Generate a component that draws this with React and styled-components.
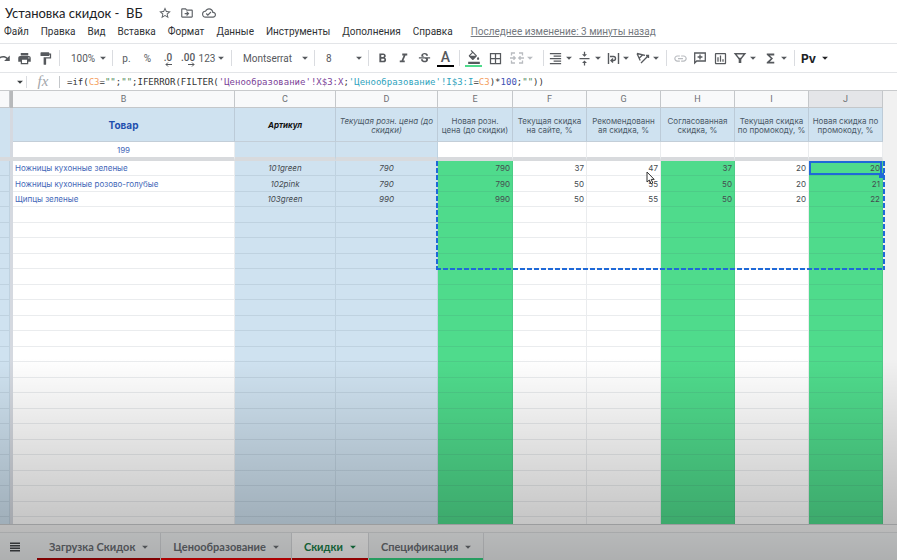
import React from 'react'
import styled, { createGlobalStyle, css } from 'styled-components'
import {
  MdArrowDropDown,
  MdBorderAll,
  MdFormatAlignRight,
  MdFormatBold,
  MdFormatColorFill,
  MdFormatItalic,
  MdFormatPaint,
  MdFunctions,
  MdInsertLink,
  MdOutlineCloudDone,
  MdOutlineDriveFileMove,
  MdOutlineInsertChart,
  MdPrint,
  MdRedo,
  MdStarBorder,
  MdStrikethroughS,
  MdVerticalAlignCenter,
} from 'react-icons/md'

const GREEN = '#4fdb8c'
const BLUE = '#cfe2f0'
const ACCENT = '#1f69d8'

const GlobalStyle = createGlobalStyle`
  * {
    box-sizing: border-box;
  }

  body {
    margin: 0;
    overflow: hidden;
    background: #fff;
    color: #3c4043;
    font-family: Roboto, "Liberation Sans", sans-serif;
  }

  button,
  select,
  input {
    margin: 0;
    padding: 0;
    border: 0;
    background: none;
    color: inherit;
    font: inherit;
  }
`

const Page = styled.div`
  position: relative;
  display: flex;
  flex-direction: column;
  height: 100vh;
`

const Shade = styled.div`
  position: absolute;
  inset: 64% 0 0;
  background: linear-gradient(rgba(0, 0, 0, 0), rgba(0, 0, 0, 0.28));
  pointer-events: none;
`

const TitleRow = styled.header`
  display: flex;
  align-items: center;
  gap: 8px;
  height: 25px;
  padding-left: 5px;
`

const Title = styled.h1`
  margin: 0 7px 0 0;
  color: #202124;
  font-family: Lato, sans-serif;
  font-size: 13px;
  font-weight: 400;
  white-space: pre;
`

const TitleButton = styled.button`
  display: flex;
  color: #5f6368;
  font-size: 14px;
`

const MenuRow = styled.nav`
  display: flex;
  align-items: center;
  gap: 12px;
  height: 19px;
  padding: 0 0 5px 4px;
  border-bottom: 1px solid #e3e5e8;
  color: #2f3235;
  font-size: 10px;
  white-space: nowrap;
`

const LastEdit = styled.a`
  margin-left: 6px;
  color: #75797e;
`

const ToolBar = styled.div`
  display: flex;
  align-items: center;
  height: 29px;
  margin-left: -10px;
  border-bottom: 1px solid #e3e5e8;
  color: #56595d;
`

const Group = styled.div`
  display: flex;
  align-items: center;
  height: 16px;
  padding: 0 3px;

  & + & {
    border-left: 1px solid #dadce0;
  }
`

const Tool = styled.button`
  display: flex;
  align-items: center;
  justify-content: center;
  width: ${props => props.$width || 21}px;
  color: ${props => (props.$dim ? '#b9bcc0' : 'inherit')};
  font-size: ${props => (props.$text ? 10 : 15)}px;

  svg {
    flex: none;
  }
`

const Caret = styled(MdArrowDropDown)`
  flex: none;
  margin: 0 -1px;
  font-size: 14px;
`

const ColorTool = styled(Tool)`
  width: 17px;
  height: 18px;
  margin: 0 2px;
  border-bottom: 2px solid ${props => props.$color};
  font-size: 14px;
  font-weight: 500;
`

const Decimals = styled.span`
  display: flex;
  flex-direction: column;
  align-items: flex-end;
  padding-top: 4px;
  font-weight: 500;
  line-height: 8px;
`

const Picker = styled.label`
  position: relative;
  display: flex;
  align-items: center;
  width: ${props => props.$width}px;
  padding-left: 8px;
  font-size: 10px;

  select {
    width: 100%;
    appearance: none;
  }

  svg {
    position: absolute;
    right: 0;
    pointer-events: none;
  }
`

const AddOnTool = styled(Tool)`
  gap: 3px;
  color: #202124;
  font: 700 12px Inter, sans-serif;
`

const FormulaBar = styled.div`
  display: flex;
  align-items: center;
  height: 18px;
  border-bottom: 1px solid #c8cacc;
`

const NameBoxButton = styled.button`
  display: flex;
  align-items: center;
  justify-content: flex-end;
  width: 27px;
  height: 12px;
  border-right: 1px solid #dadce0;
`

const FxMark = styled.span`
  width: 33px;
  height: 12px;
  border-right: 1px solid #c4c7ca;
  color: #a3a6aa;
  font: italic 15px/11px "Liberation Serif", serif;
  text-align: center;
`

const Formula = styled.code`
  padding-left: 7px;
  color: #333;
  font: 9px/12px "DejaVu Sans Mono", monospace;
  white-space: nowrap;
`

const Part = styled.span`
  color: ${props => props.$color};
`

const Grid = styled.main`
  position: relative;
  flex: 1;
  min-height: 0;
  overflow: hidden;
  background: #f1f1f1;
`

const Sheet = styled.table`
  width: 100%;
  border-collapse: separate;
  border-spacing: 0;
  table-layout: fixed;
  font: 9px/10px Inter, sans-serif;
`

const Letter = styled.th`
  height: 17px;
  padding: 0;
  border-right: 1px solid #c4c7ca;
  border-bottom: 1px solid #c4c7ca;
  background: ${props => (props.$active ? '#e4e5e8' : '#f8f9fa')};
  color: #6d7074;
  font: 400 9px/12px Roboto, sans-serif;
`

const Gap = styled.td`
  padding: 0;
  background: ${props => (props.$head ? '#b7b9bb' : '#d5d9e0')};
`

const Side = styled.td`
  padding: 0;
  background: ${props => (props.$fill ? BLUE : '#f1f1f1')};
`

const HeadCell = styled.th`
  height: 34px;
  padding: 2px 0 0;
  border-right: 1px solid #bccbd8;
  border-bottom: 1px solid #c3ced8;
  background: ${BLUE};
  color: #4a5866;
  font-size: 8px;
  font-weight: 400;
  line-height: 9px;
  white-space: pre-line;

  ${props => props.$look === 'product' && css`
    color: #1f4fae;
    font-size: 10px;
    font-weight: 700;
  `}

  ${props => props.$look === 'code' && css`
    color: #111;
    font-style: italic;
    font-weight: 700;
  `}

  ${props => props.$look === 'italic' && css`
    font-style: italic;
  `}
`

const Cell = styled.td`
  position: relative;
  padding: 0 2px;
  border-right: 1px solid rgba(60, 80, 100, 0.11);
  border-bottom: 1px solid rgba(60, 80, 100, 0.11);
  background: ${props => props.$fill || '#fff'};
  color: ${props => props.$color || '#454b50'};
  font-size: 8px;
  font-style: ${props => (props.$italic ? 'italic' : 'normal')};
  text-align: ${props => props.$align || 'right'};
  white-space: nowrap;

  ${props => props.$selected && css`
    box-shadow: inset 0 0 0 2px ${ACCENT};
  `}
`

const Row = styled.tr`
  height: 15px;

  &:nth-child(even) {
    height: 16px;
  }
`

const FilterRow = styled.tr`
  height: 19px;

  td:not(:last-child) {
    border-bottom: 4px solid #d8dadd;
  }
`

const FillHandle = styled.span`
  position: absolute;
  right: -2px;
  bottom: -3px;
  z-index: 2;
  width: 5px;
  height: 5px;
  background: ${ACCENT};
`

// dashed frame round the copied range E3:J9
const CopyFrame = styled.div`
  position: absolute;
  top: 70px;
  left: 436px;
  width: 449px;
  height: 109px;
  background:
    repeating-linear-gradient(90deg, ${ACCENT} 0 5px, transparent 5px 7px) bottom / 100% 2px no-repeat,
    repeating-linear-gradient(${ACCENT} 0 5px, transparent 5px 7px) left / 2px 100% no-repeat,
    repeating-linear-gradient(${ACCENT} 0 5px, transparent 5px 7px) right / 2px 100% no-repeat;
  pointer-events: none;
`

const Pointer = styled.svg`
  position: absolute;
  top: 80px;
  left: 646px;
`

const ScrollStrip = styled.div`
  height: 8px;
  border-top: 1px solid #c9cbcd;
  background: #f3f3f3;
`

const TabBar = styled.footer`
  display: flex;
  height: 28px;
  border-top: 1px solid #dcdee0;
  background: #f1f3f4;
`

const AllSheets = styled.button`
  width: 37px;
  padding: 0 7px 0 0;
  color: #44474a;
`

const Tab = styled.button`
  display: flex;
  align-items: center;
  gap: 4px;
  padding: 1px 9px 0 12px;
  border-right: 1px solid #d8dadd;
  background: ${props => (props.$active ? '#fff' : 'transparent')};
  box-shadow: inset 0 -2px ${props => props.$line};
  color: ${props => (props.$active ? '#188048' : '#6b6f74')};
  font: 700 11px/14px Lato, sans-serif;
  white-space: nowrap;
`

const menu = ['Файл', 'Правка', 'Вид', 'Вставка', 'Формат', 'Данные', 'Инструменты', 'Дополнения', 'Справка']

const columns = [
  { letter: 'B', width: 222, title: 'Товар', look: 'product', align: 'left', color: '#4468b8' },
  { letter: 'C', width: 101, title: 'Артикул', look: 'code', align: 'center', fill: BLUE, italic: true },
  { letter: 'D', width: 102, title: 'Текущая розн. цена (до\nскидки)', look: 'italic', align: 'center', fill: BLUE, italic: true },
  { letter: 'E', width: 75, title: 'Новая розн.\nцена (до скидки)', fill: GREEN },
  { letter: 'F', width: 74, title: 'Текущая скидка\nна сайте, %' },
  { letter: 'G', width: 74, title: 'Рекомендованн\nая скидка, %' },
  { letter: 'H', width: 74, title: 'Согласованная\nскидка, %', fill: GREEN },
  { letter: 'I', width: 74, title: 'Текущая скидка\nпо промокоду, %' },
  { letter: 'J', width: 74, title: 'Новая скидка по\nпромокоду, %', fill: GREEN },
]

const products = [
  ['Ножницы кухонные зеленые', '101green', 790, 790, 37, 47, 37, 20, 20],
  ['Ножницы кухонные розово-голубые', '102pink', 790, 790, 50, 55, 50, 20, 21],
  ['Щипцы зеленые', '103green', 990, 990, 50, 55, 50, 20, 22],
]

const rows = [...products, ...Array.from({ length: 21 }, () => [])]

const tabs = [
  { name: 'Загрузка Скидок', line: '#b00000' },
  { name: 'Ценообразование', line: '#f00000' },
  { name: 'Скидки', line: '#c80000', active: true },
  { name: 'Спецификация', line: '#35d884' },
]

const DecimalArrow = ({ right }) => (
  <svg width="7" height="5" viewBox="0 0 7 5" fill="none" stroke="currentColor">
    <path d={right ? 'M0 2.5h6M4 .5l2 2-2 2' : 'M7 2.5H1M3 .5l-2 2 2 2'} />
  </svg>
)

const MergeIcon = () => (
  <svg width="14" height="14" viewBox="0 0 14 14" fill="none" stroke="currentColor" strokeWidth="1.3">
    <path d="M5 2H1.5v2.5M9 2h3.500v2.500M5 12H1.500V9.500M9 12h3.500V9.500M0 7h5M3.500 5.300L5.200 7 3.500 8.700M14 7H9M10.500 5.300L8.800 7l1.700 1.700" />
  </svg>
)

const WrapIcon = () => (
  <svg width="13" height="13" viewBox="0 0 13 13" fill="none" stroke="currentColor" strokeWidth="1.4">
    <path d="M1.5 1v11M11.500 1v11M3 4.500h3.500a2 2 0 0 1 0 4H4M6 6.500l-2 2 2 2" />
  </svg>
)

const RotateIcon = () => (
  <svg width="14" height="14" viewBox="0 0 14 14" fill="none" stroke="currentColor" strokeWidth="1.3">
    <path d="M1 2.5l8 1.800M1 2.500l3.200 7M6.800 3.800L3.300 7M5 12l7.500-7.500M10 4.500h2.500V7" />
  </svg>
)

const CommentIcon = () => (
  <svg width="14" height="14" viewBox="0 0 14 14" fill="none" stroke="currentColor" strokeWidth="1.3">
    <path d="M1.7 12V2h10.600v8H3.700zM7 3.600v4.800M4.600 6h4.800" />
  </svg>
)

const FilterIcon = () => (
  <svg width="14" height="14" viewBox="0 0 14 14" fill="none" stroke="currentColor" strokeWidth="1.5">
    <path d="M2.2 2.700h9.600L8 7.600H6z" />
    <path d="M7 7v5" strokeWidth="2.6" />
  </svg>
)

const ListIcon = () => (
  <svg width="10" height="10" viewBox="0 0 10 10" stroke="currentColor" strokeWidth="1.6">
    <path d="M0 1.200h10M0 3.700h10M0 6.200h10M0 8.700h10" />
  </svg>
)

function Tools() {
  return (
    <ToolBar role="toolbar">
      <Group>
        <Tool aria-label="Повторить"><MdRedo /></Tool>
        <Tool aria-label="Печать"><MdPrint /></Tool>
        <Tool aria-label="Копировать форматирование"><MdFormatPaint /></Tool>
      </Group>
      <Group>
        <Picker $width={46}>
          <select aria-label="Масштаб"><option>100%</option></select>
          <Caret />
        </Picker>
      </Group>
      <Group>
        <Tool $text>р.</Tool>
        <Tool $text>%</Tool>
        <Tool $text $width={20} aria-label="Меньше знаков"><Decimals>.0<DecimalArrow /></Decimals></Tool>
        <Tool $text $width={20} aria-label="Больше знаков"><Decimals>.00<DecimalArrow right /></Decimals></Tool>
        <Tool $text $width={30}>123<Caret /></Tool>
      </Group>
      <Group>
        <Picker $width={76}>
          <select aria-label="Шрифт"><option>Montserrat</option></select>
          <Caret />
        </Picker>
      </Group>
      <Group>
        <Picker $width={47}>
          <select aria-label="Размер шрифта"><option>8</option></select>
          <Caret />
        </Picker>
      </Group>
      <Group>
        <Tool aria-label="Полужирный"><MdFormatBold /></Tool>
        <Tool aria-label="Курсив"><MdFormatItalic /></Tool>
        <Tool aria-label="Зачеркнутый"><MdStrikethroughS /></Tool>
        <ColorTool $color="#000" aria-label="Цвет текста">A</ColorTool>
      </Group>
      <Group>
        <ColorTool $color={GREEN} aria-label="Цвет заливки"><MdFormatColorFill /></ColorTool>
        <Tool $width={22} aria-label="Границы"><MdBorderAll /></Tool>
        <Tool $dim $width={34} aria-label="Объединить ячейки"><MergeIcon /><Caret /></Tool>
      </Group>
      <Group>
        <Tool $width={29} aria-label="Выравнивание"><MdFormatAlignRight /><Caret /></Tool>
        <Tool $width={29} aria-label="Вертикальное выравнивание"><MdVerticalAlignCenter /><Caret /></Tool>
        <Tool $width={29} aria-label="Перенос текста"><WrapIcon /><Caret /></Tool>
        <Tool $width={29} aria-label="Поворот текста"><RotateIcon /><Caret /></Tool>
      </Group>
      <Group>
        <Tool $dim $width={20} aria-label="Вставить ссылку"><MdInsertLink /></Tool>
        <Tool $width={20} aria-label="Комментарий"><CommentIcon /></Tool>
        <Tool $width={20} aria-label="Диаграмма"><MdOutlineInsertChart /></Tool>
        <Tool $width={32} aria-label="Фильтр"><FilterIcon /><Caret /></Tool>
        <Tool $width={29} aria-label="Функции"><MdFunctions /><Caret /></Tool>
      </Group>
      <Group>
        <AddOnTool $width={36}>Pv<Caret /></AddOnTool>
      </Group>
    </ToolBar>
  )
}

function SheetTable() {
  return (
    <Sheet>
      <colgroup>
        <col style={{ width: 10 }} />
        <col style={{ width: 3 }} />
        {columns.map(column => <col key={column.letter} style={{ width: column.width }} />)}
        <col />
      </colgroup>
      <thead>
        <tr>
          <Letter />
          <Gap $head />
          {columns.map(column => (
            <Letter key={column.letter} $active={column.letter === 'J'}>{column.letter}</Letter>
          ))}
          <Side />
        </tr>
        <tr>
          <Side $fill />
          <Gap />
          {columns.map(column => (
            <HeadCell key={column.letter} $look={column.look}>{column.title}</HeadCell>
          ))}
          <Side />
        </tr>
        <FilterRow>
          <Side $fill />
          <Gap />
          {columns.map(column => (
            <Cell
              key={column.letter}
              $align="center"
              $color={column.color}
              $fill={column.fill === BLUE ? BLUE : '#fff'}
            >
              {column.letter === 'B' ? 199 : null}
            </Cell>
          ))}
          <Side />
        </FilterRow>
      </thead>
      <tbody>
        {rows.map((row, i) => (
          <Row key={i}>
            <Cell $fill={BLUE} />
            <Gap />
            {columns.map((column, j) => {
              const selected = i === 0 && column.letter === 'J'
              return (
                <Cell
                  key={column.letter}
                  $align={column.align}
                  $color={column.color}
                  $fill={column.fill}
                  $italic={column.italic}
                  $selected={selected}
                >
                  {row[j]}
                  {selected && <FillHandle />}
                </Cell>
              )
            })}
            <Side />
          </Row>
        ))}
      </tbody>
    </Sheet>
  )
}

export default function App() {
  return (
    <Page>
      <GlobalStyle />
      <TitleRow>
        <Title>{'Установка скидок -  ВБ'}</Title>
        <TitleButton aria-label="Пометить"><MdStarBorder /></TitleButton>
        <TitleButton aria-label="Переместить"><MdOutlineDriveFileMove /></TitleButton>
        <TitleButton aria-label="Сохранено"><MdOutlineCloudDone /></TitleButton>
      </TitleRow>
      <MenuRow>
        {menu.map(name => <button key={name}>{name}</button>)}
        <LastEdit href="#history">Последнее изменение: 3 минуты назад</LastEdit>
      </MenuRow>
      <Tools />
      <FormulaBar>
        <NameBoxButton aria-label="Диапазоны"><Caret /></NameBoxButton>
        <FxMark>fx</FxMark>
        <Formula>
          =if(<Part $color="#f4a062">C3</Part>=<Part $color="#4c8a55">""</Part>;<Part $color="#4c8a55">""</Part>;IFERROR(FILTER(
          <Part $color="#7b3f98">'Ценообразование'!X$3:X</Part>;
          <Part $color="#2fa3bd">'Ценообразование'!I$3:I</Part>=<Part $color="#f4a062">C3</Part>)*
          <Part $color="#3f51b5">100</Part>;<Part $color="#4c8a55">""</Part>))
        </Formula>
      </FormulaBar>
      <Grid>
        <SheetTable />
        <CopyFrame />
        <Pointer width="10" height="14" viewBox="0 0 10 14">
          <path d="M1 1v10l2.400-2 1.600 3.800 1.800-.8-1.600-3.600h3z" fill="#fff" stroke="#333" />
        </Pointer>
      </Grid>
      <ScrollStrip />
      <TabBar>
        <AllSheets aria-label="Все листы"><ListIcon /></AllSheets>
        {tabs.map(tab => (
          <Tab key={tab.name} $line={tab.line} $active={tab.active}>
            {tab.name}
            <Caret />
          </Tab>
        ))}
      </TabBar>
      <Shade />
    </Page>
  )
}
